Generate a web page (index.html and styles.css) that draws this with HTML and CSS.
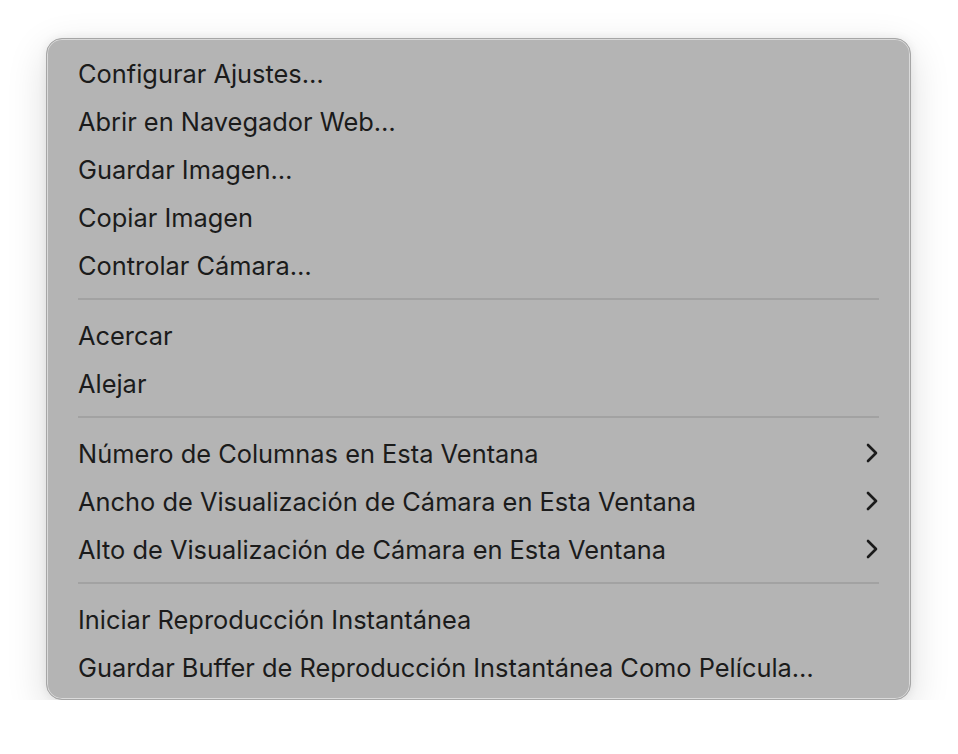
FILE: index.html
```html
<!DOCTYPE html>
<html lang="es">
<head>
    <meta charset="UTF-8">
    <meta name="viewport" content="width=device-width, initial-scale=1.0">
    <title>Menú contextual</title>
    <link rel="stylesheet" href="styles.css">
</head>
<body>
    <div class="ctx-menu">
        <div class="ctx-item">Configurar Ajustes…</div>
        <div class="ctx-item">Abrir en Navegador Web…</div>
        <div class="ctx-item">Guardar Imagen…</div>
        <div class="ctx-item">Copiar Imagen</div>
        <div class="ctx-item">Controlar Cámara…</div>
        <div class="ctx-sep"></div>
        <div class="ctx-item">Acercar</div>
        <div class="ctx-item">Alejar</div>
        <div class="ctx-sep"></div>
        <div class="ctx-item has-sub">
            <span>Número de Columnas en Esta Ventana</span>
            <svg class="ctx-chevron" viewBox="0 0 12 20"><path d="M2 2 L10 10 L2 18"/></svg>
        </div>
        <div class="ctx-item has-sub">
            <span>Ancho de Visualización de Cámara en Esta Ventana</span>
            <svg class="ctx-chevron" viewBox="0 0 12 20"><path d="M2 2 L10 10 L2 18"/></svg>
        </div>
        <div class="ctx-item has-sub">
            <span>Alto de Visualización de Cámara en Esta Ventana</span>
            <svg class="ctx-chevron" viewBox="0 0 12 20"><path d="M2 2 L10 10 L2 18"/></svg>
        </div>
        <div class="ctx-sep"></div>
        <div class="ctx-item">Iniciar Reproducción Instantánea</div>
        <div class="ctx-item">Guardar Buffer de Reproducción Instantánea Como Película…</div>
    </div>
</body>
</html>
```

FILE: styles.css
```css
/* Page */
body {
    margin: 0;
    background: #ffffff;
    font-family: Inter, "Noto Sans", sans-serif;
}

/* Menu panel */
.ctx-menu {
    box-sizing: border-box;
    width: 865px;
    margin: 38px 0 0 46px;
    padding: 10px 0 8px;
    background: #b4b4b4;
    border: 1px solid #a6a6a6;
    border-radius: 16px;
    box-shadow: inset 0 0 0 1px rgba(255,255,255,0.5),
                0 12px 40px rgba(0,0,0,0.14),
                0 0 10px rgba(0,0,0,0.07);
}

.ctx-item {
    height: 48px;
    padding: 0 32px 0 31px;
    display: flex;
    align-items: center;
    justify-content: space-between;
    color: #1b1b1b;
    font-size: 25.4px;
    white-space: nowrap;
}

.ctx-chevron {
    width: 12px;
    height: 20px;
    fill: none;
    stroke: #1b1b1b;
    stroke-width: 2.6;
    stroke-linecap: round;
    stroke-linejoin: round;
}

.ctx-sep {
    height: 2px;
    margin: 9px 31px 11px;
    background: #a2a2a2;
}
```
